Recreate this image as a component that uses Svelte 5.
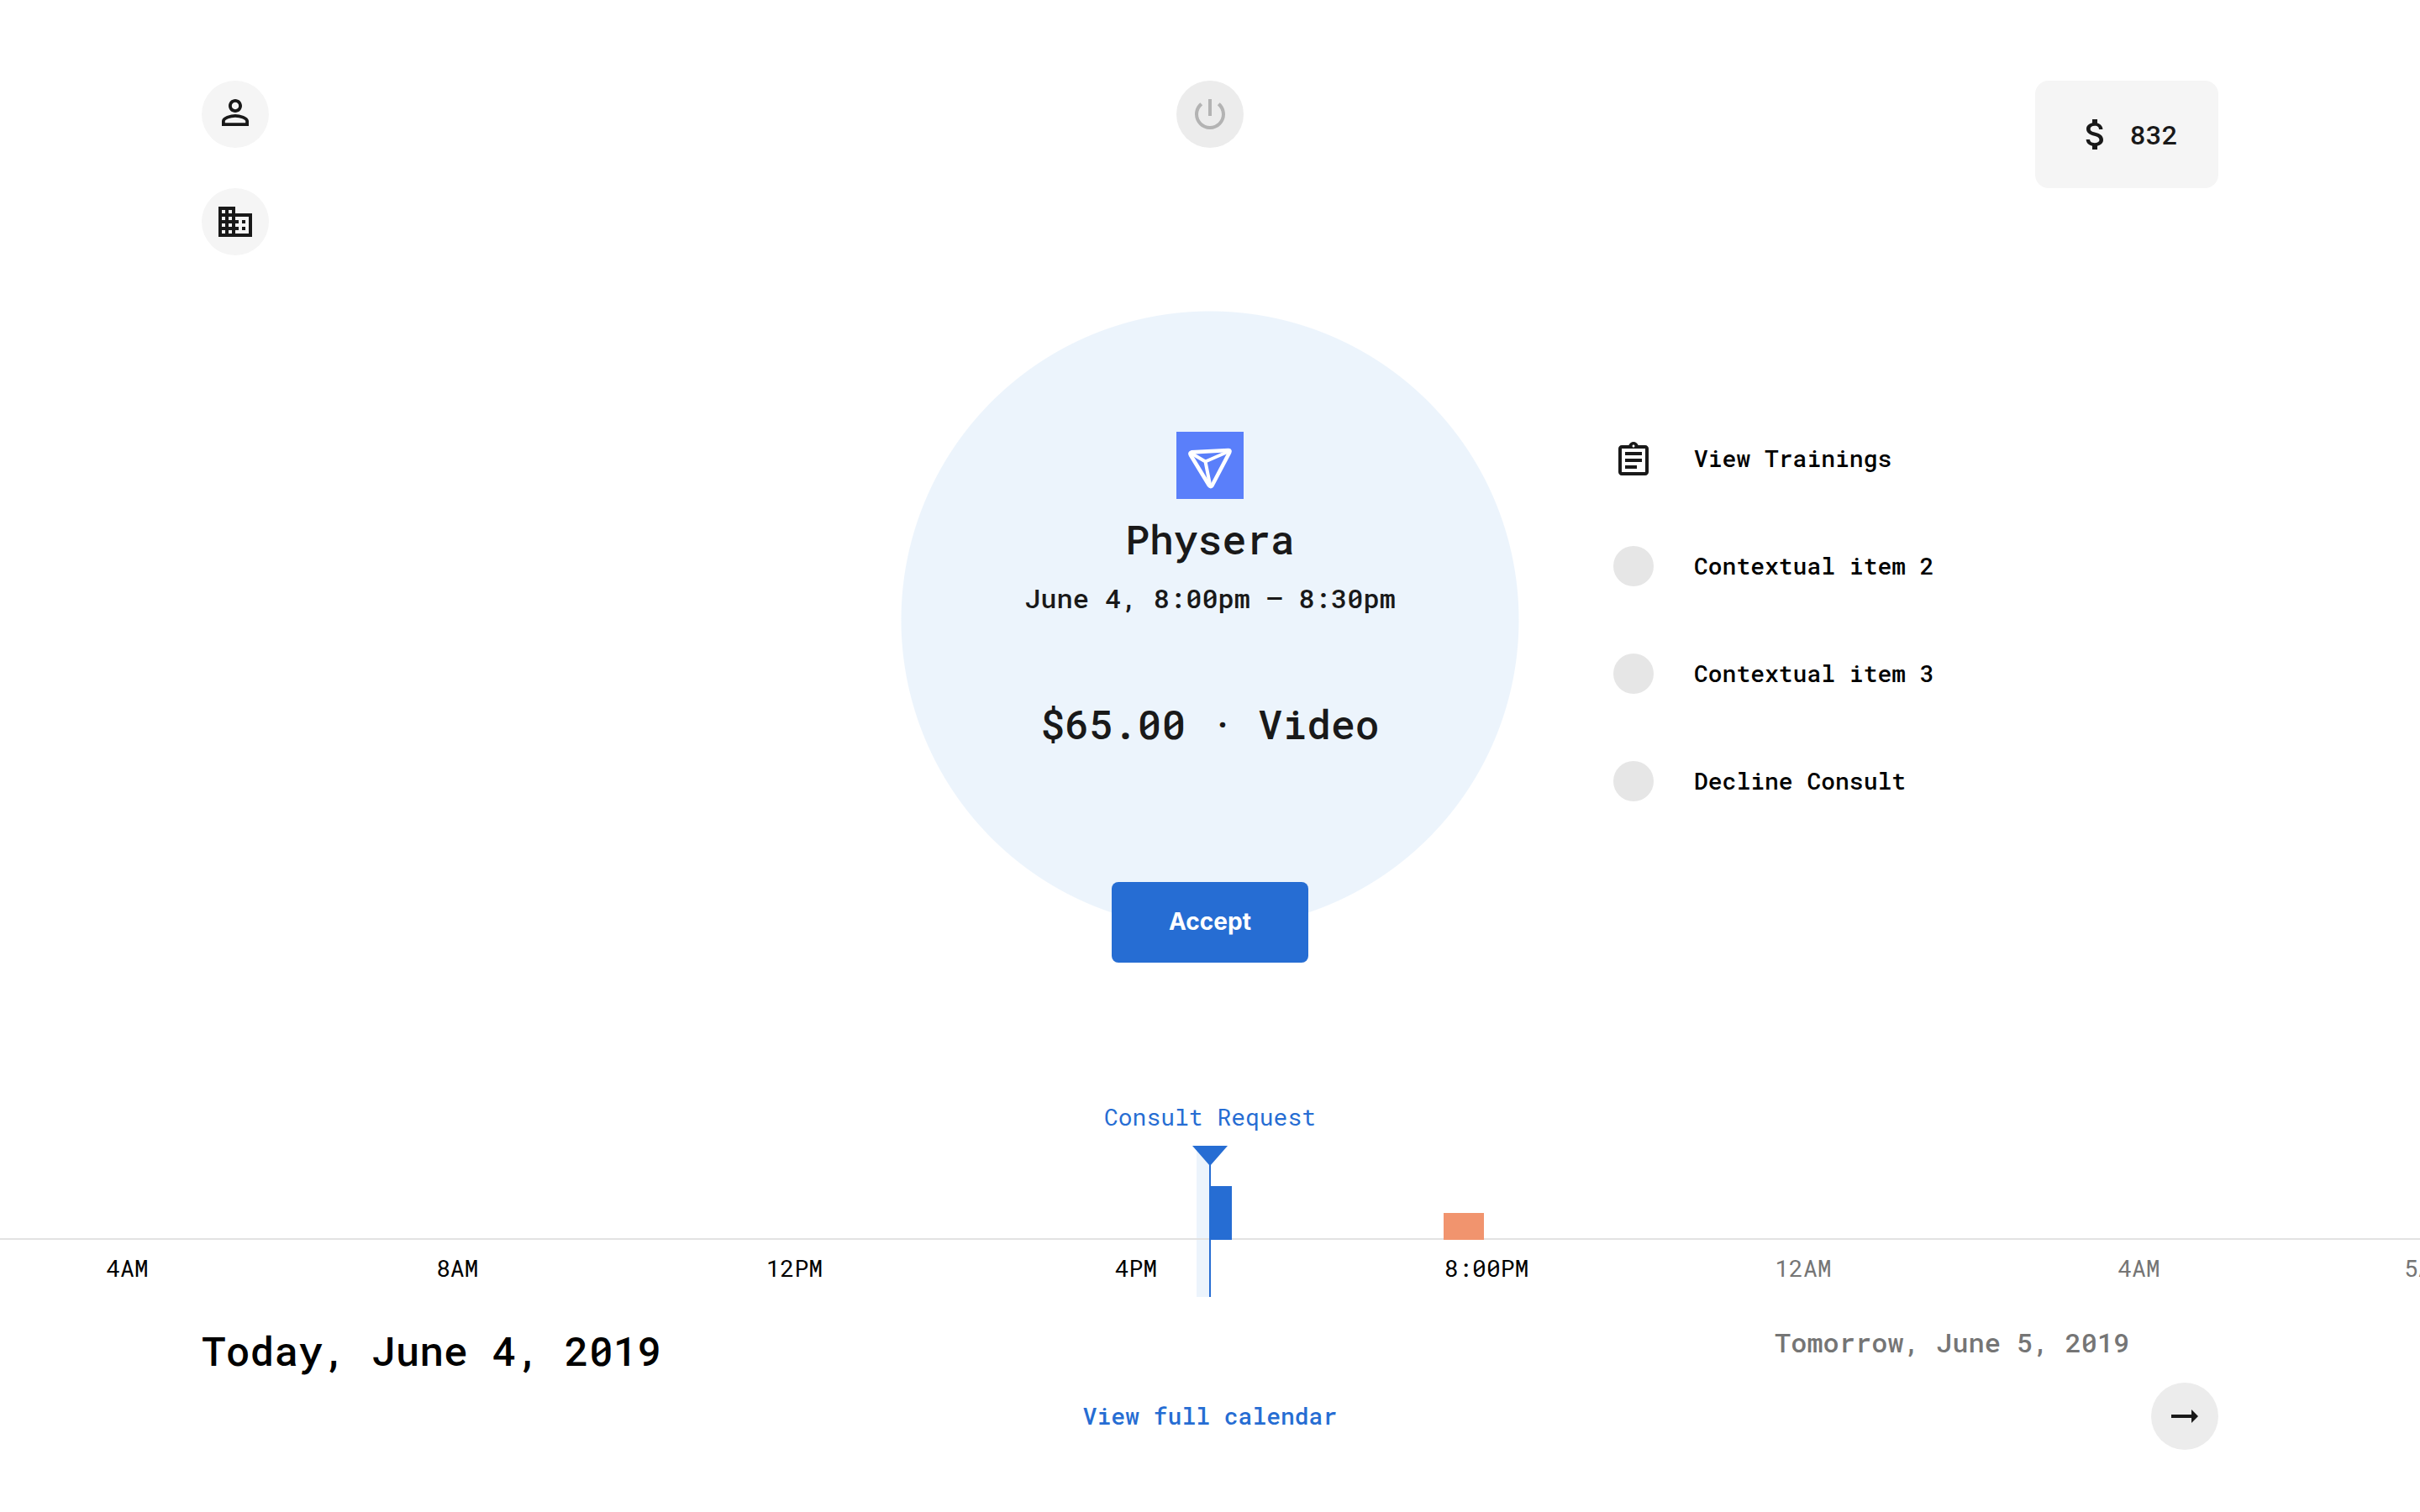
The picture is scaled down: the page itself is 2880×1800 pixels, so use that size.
<script>
  const icons = {
    person:
      'M12 5.9c1.16 0 2.1.94 2.1 2.1s-.94 2.1-2.1 2.1S9.9 9.16 9.9 8s.94-2.1 2.1-2.1m0 9c2.97 0 6.1 1.46 6.1 2.1v1.1H5.9V17c0-.64 3.13-2.1 6.1-2.1M12 4C9.79 4 8 5.79 8 8s1.79 4 4 4 4-1.79 4-4-1.79-4-4-4zm0 9c-2.67 0-8 1.34-8 4v3h16v-3c0-2.66-5.33-4-8-4z',
    business:
      'M12 7V3H2v18h20V7H12zM6 19H4v-2h2v2zm0-4H4v-2h2v2zm0-4H4V9h2v2zm0-4H4V5h2v2zm4 12H8v-2h2v2zm0-4H8v-2h2v2zm0-4H8V9h2v2zm0-4H8V5h2v2zm10 12h-8v-2h2v-2h-2v-2h2v-2h-2V9h8v10zm-2-8h-2v2h2v-2zm0 4h-2v2h2v-2z',
    power:
      'M13 3h-2v10h2V3zm4.83 2.17l-1.42 1.42C17.99 7.86 19 9.81 19 12c0 3.87-3.13 7-7 7s-7-3.13-7-7c0-2.19 1.01-4.14 2.58-5.42L6.17 5.17C4.23 6.82 3 9.26 3 12c0 4.97 4.03 9 9 9s9-4.03 9-9c0-2.74-1.23-5.18-3.17-6.83z',
    money:
      'M11.8 10.9c-2.27-.59-3-1.2-3-2.15 0-1.09 1.01-1.85 2.7-1.85 1.78 0 2.44.85 2.5 2.1h2.21c-.07-1.72-1.12-3.3-3.21-3.81V3h-3v2.16c-1.94.42-3.5 1.68-3.5 3.61 0 2.31 1.91 3.46 4.7 4.13 2.5.6 3 1.48 3 2.41 0 .69-.49 1.79-2.7 1.79-2.06 0-2.87-.92-2.98-2.1h-2.2c.12 2.19 1.76 3.42 3.68 3.83V21h3v-2.15c1.95-.37 3.5-1.5 3.5-3.55 0-2.84-2.43-3.81-4.7-4.4z',
    assignment:
      'M7 15h7v2H7zm0-4h10v2H7zm0-4h10v2H7zm12-4h-4.18C14.4 1.84 13.3 1 12 1c-1.3 0-2.4.84-2.82 2H5c-1.1 0-2 .9-2 2v14c0 1.1.9 2 2 2h14c1.1 0 2-.9 2-2V5c0-1.1-.9-2-2-2zm-7-.25c.41 0 .75.34.75.75s-.34.75-.75.75-.75-.34-.75-.75.34-.75.75-.75zM19 19H5V5h14v14z',
    arrow: 'M16.01 11H4v2h12.01v3L20 12l-3.99-4v3z',
  };

  const actions = [
    { label: 'View Trainings', icon: 'assignment' },
    { label: 'Contextual item 2' },
    { label: 'Contextual item 3' },
    { label: 'Decline Consult' },
  ];

  const hours = [
    { label: '4AM' },
    { label: '8AM' },
    { label: '12PM' },
    { label: '4PM' },
    { label: '8:00PM' },
    { label: '12AM', next: true },
    { label: '4AM', next: true },
    { label: '5AM', next: true },
  ];
</script>

{#snippet glyph(name, box = '0 0 24 24')}
  <svg class="icon" viewBox={box} aria-hidden="true"><path d={icons[name]} /></svg>
{/snippet}

<div class="page">
  <header class="top">
    <nav class="shortcuts" aria-label="Account">
      <button class="round soft" aria-label="Profile">{@render glyph('person', '0 1 24 24')}</button>
      <button class="round soft" aria-label="Organization">{@render glyph('business')}</button>
    </nav>
    <button class="round power" aria-label="Go offline">{@render glyph('power')}</button>
    <div class="balance">
      {@render glyph('money')}
      <span>832</span>
    </div>
  </header>

  <main class="stage">
    <section class="consult">
      <svg class="logo" viewBox="0 0 80 80" aria-hidden="true">
        <rect width="80" height="80" fill="#5a7ffa" />
        <g fill="none" stroke="#fff" stroke-linejoin="round" stroke-linecap="round">
          <path stroke-width="4.6" d="M18 24.4 62 22Q64.500 22 63 25L42.500 64Q40.700 66.300 39 64L16.800 27.500Q15.500 25 18 24.400Z" />
          <path stroke-width="4" d="M17.500 25.500 34.500 35.500 62 23.500M34.500 35.500 40 63" />
        </g>
      </svg>
      <h1>Physera</h1>
      <p class="when">June 4, 8:00pm – 8:30pm</p>
      <p class="price">$65.00 · Video</p>
      <button class="accept">Accept</button>
    </section>

    <ul class="actions">
      {#each actions as action}
        <li>
          <button class="action">
            {#if action.icon}
              {@render glyph(action.icon, '0 -1 24 24')}
            {:else}
              <span class="dot"></span>
            {/if}
            {action.label}
          </button>
        </li>
      {/each}
    </ul>
  </main>

  <section class="timeline" aria-label="Schedule">
    <p class="request">Consult Request</p>
    <div class="track">
      <div class="pending"></div>
      <div class="axis"></div>
      <div class="event current"></div>
      <div class="event booked"></div>
      <div class="now"></div>
      <svg class="pointer" viewBox="0 0 42 24" aria-hidden="true"><path d="M0 0h42L21 24z" /></svg>
      <div class="hours">
        {#each hours as hour}
          <span class:next={hour.next}>{hour.label}</span>
        {/each}
      </div>
    </div>
    <div class="days">
      <h2>Today, June 4, 2019</h2>
      <h3>Tomorrow, June 5, 2019</h3>
    </div>
  </section>

  <footer class="bottom">
    <a href="#calendar">View full calendar</a>
    <button class="round forward" aria-label="Next day">{@render glyph('arrow')}</button>
  </footer>
</div>

<style>
  :global(body) {
    margin: 0;
    background: #fff;
  }

  .page {
    display: flex;
    flex-direction: column;
    min-height: 100vh;
    box-sizing: border-box;
    padding-bottom: 74px;
    overflow: hidden;
    background: #fff;
    color: #000;
    font-family: 'Roboto Mono', 'DejaVu Sans Mono', monospace;
    font-size: 28px;
    font-weight: 500;
    line-height: 40px;
  }

  h1, h2, h3, p, ul {
    margin: 0;
    padding: 0;
    font-weight: 500;
  }

  ul {
    list-style: none;
  }

  button {
    border: 0;
    padding: 0;
    background: none;
    color: inherit;
    font: inherit;
    cursor: pointer;
  }

  .icon {
    display: block;
    flex: none;
    width: 48px;
    height: 48px;
    fill: #191919;
  }

  .round {
    display: flex;
    align-items: center;
    justify-content: center;
    width: 80px;
    height: 80px;
    border-radius: 50%;
    background: #ececec;
  }

  .round.soft {
    background: #f5f5f5;
  }

  .power .icon {
    fill: #b3b3b3;
  }

  .top {
    display: grid;
    grid-template-columns: 1fr auto 1fr;
    align-items: start;
    padding: 96px 240px 0;
  }

  .shortcuts {
    display: flex;
    flex-direction: column;
    gap: 48px;
  }

  .balance {
    display: flex;
    align-items: center;
    justify-self: end;
    gap: 16px;
    padding: 40px 48px;
    border-radius: 16px;
    background: #f5f5f5;
    color: #191919;
    font-size: 32px;
    line-height: 48px;
  }

  .stage {
    display: grid;
    grid-template-columns: 1fr auto 1fr;
    align-items: start;
    column-gap: 112px;
    margin-top: 66px;
  }

  .consult {
    grid-column: 2;
    display: flex;
    flex-direction: column;
    align-items: center;
    box-sizing: border-box;
    width: 736px;
    padding-top: 144px;
    background: radial-gradient(circle 368px at 368px 368px, #ecf4fc 367px, transparent 368px);
    color: #191919;
  }

  .logo {
    width: 80px;
    height: 80px;
  }

  h1, .price {
    font-size: 48px;
    line-height: 64px;
  }

  h1 {
    margin-top: 16px;
  }

  .when {
    margin-top: 16px;
    font-size: 32px;
    line-height: 44px;
  }

  .price {
    margin-top: 96px;
  }

  .accept {
    min-width: 234px;
    margin-top: 156px;
    padding: 0 64px 2px;
    border-radius: 8px;
    background: #266dd3;
    color: #fff;
    font-family: Inter, sans-serif;
    font-size: 28px;
    font-weight: 700;
    line-height: 94px;
  }

  .actions {
    display: flex;
    flex-direction: column;
    gap: 80px;
    padding-top: 152px;
  }

  .action {
    display: flex;
    align-items: center;
    gap: 48px;
    height: 48px;
  }

  .dot {
    width: 48px;
    height: 48px;
    border-radius: 50%;
    background: #e6e6e6;
  }

  .timeline {
    margin-top: 164px;
  }

  .request {
    color: #266dd3;
    font-weight: 400;
    text-align: center;
  }

  .track {
    position: relative;
    margin-top: 14px;
    padding-top: 126px;
  }

  .axis {
    position: absolute;
    top: 110px;
    left: 0;
    right: 0;
    height: 2px;
    background: #e2e2e2;
  }

  .pending {
    position: absolute;
    top: 0;
    right: 50%;
    width: 16px;
    height: 180px;
    background: #ecf4fc;
  }

  .now {
    position: absolute;
    top: 0;
    left: 50%;
    width: 2px;
    height: 180px;
    margin-left: -1px;
    background: #266dd3;
  }

  .pointer {
    position: absolute;
    top: 0;
    left: 50%;
    width: 42px;
    height: 24px;
    margin-left: -21px;
    fill: #266dd3;
  }

  .event {
    position: absolute;
  }

  .current {
    top: 48px;
    left: 50%;
    width: 26px;
    height: 64px;
    background: #266dd3;
  }

  .booked {
    top: 80px;
    left: 59.65%;
    width: 48px;
    height: 32px;
    background: #f1946e;
  }

  .hours {
    display: grid;
    grid-template-columns: 393fr 393fr 415fr 392fr 394fr 408fr 341fr 19fr;
    padding-left: 4.38%;
    font-weight: 400;
    white-space: nowrap;
  }

  .hours span {
    min-width: 0;
  }

  .hours .next, h3 {
    color: #757575;
  }

  .days {
    display: grid;
    grid-template-columns: 1872fr 768fr;
    align-items: start;
    margin-top: 46px;
    padding-left: 240px;
  }

  h2 {
    font-size: 48px;
    line-height: 64px;
  }

  h3 {
    font-size: 32px;
    line-height: 44px;
  }

  .bottom {
    display: grid;
    grid-template-columns: 1fr auto 1fr;
    align-items: center;
    margin-top: 6px;
    padding: 0 240px;
  }

  .bottom a {
    grid-column: 2;
    color: #266dd3;
    text-decoration: none;
  }

  .forward {
    justify-self: end;
  }
</style>
